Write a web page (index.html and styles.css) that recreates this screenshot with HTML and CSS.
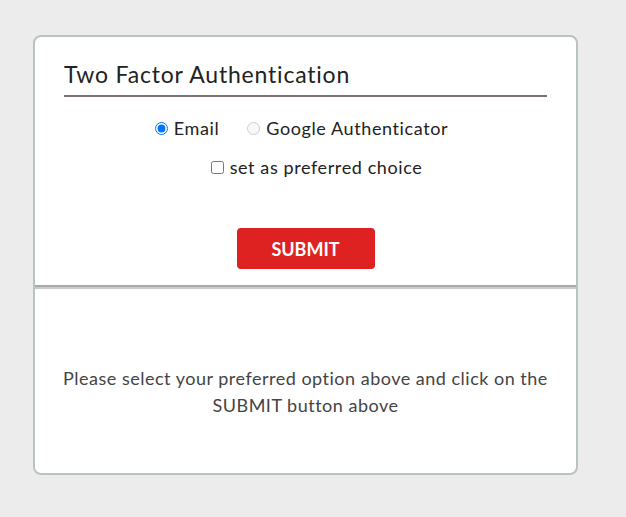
FILE: index.html
```html
<!DOCTYPE html>
<html>
<head>
<meta charset="utf-8">
<link rel="stylesheet" href="styles.css">
</head>
<body>
<div class="card">
  <div class="top">
    <h2 class="title">Two Factor Authentication</h2>
    <div class="options">
      <label class="opt"><input type="radio" name="m" checked> Email</label>
      <label class="opt"><input type="radio" name="m" disabled> Google Authenticator</label>
    </div>
    <div class="pref">
      <label class="opt"><input type="checkbox"> set as preferred choice</label>
    </div>
    <div class="actions">
      <button class="submit">SUBMIT</button>
    </div>
  </div>
  <div class="bottom">
    <p class="msg">Please select your preferred option above and click on the SUBMIT button above</p>
  </div>
</div>
</body>
</html>
```
FILE: styles.css
```css
html, body {
  margin: 0;
  background: #ececec;
}
body {
  padding: 35px 0 0 33px;
  font-family: Lato, "Open Sans", sans-serif;
  color: #222;
}
.card {
  width: 545px;
  height: 440px;
  box-sizing: border-box;
  background: #fff;
  border: 2px solid #b9c3c3;
  border-radius: 8px;
  display: flex;
  flex-direction: column;
  overflow: hidden;
}
.top {
  height: 250px;
  box-sizing: border-box;
  padding: 22px 29px 0;
  border-bottom: 2px solid #a9a9a9;
}
.title {
  margin: 0;
  font-size: 23px;
  font-weight: 400;
  letter-spacing: 0.8px;
  line-height: 30px;
  padding-bottom: 6px;
  border-bottom: 2px solid #7d7070;
}
.options {
  display: flex;
  justify-content: center;
  gap: 28px;
  margin-top: 20px;
  padding-right: 8px;
  font-size: 18px;
  letter-spacing: 0.6px;
  line-height: 22px;
}
.opt {
  display: flex;
  align-items: center;
}
.opt input {
  margin: 0 6px 0 0;
  width: 13px;
  height: 13px;
}
.pref {
  display: flex;
  justify-content: center;
  margin-top: 17px;
  padding-left: 22px;
  font-size: 18px;
  letter-spacing: 0.6px;
  line-height: 22px;
}
.actions {
  display: flex;
  justify-content: center;
  margin-top: 50px;
}
.submit {
  width: 138px;
  height: 41px;
  background: #de2222;
  color: #fff;
  border: none;
  border-radius: 4px;
  font-family: Lato, sans-serif;
  font-weight: 700;
  font-size: 18px;
  letter-spacing: 0;
}
.bottom {
  flex: 1;
  border-top: 2px solid #cacaca;
  display: flex;
  justify-content: center;
  padding: 76px 20px 0;
}
.msg {
  margin: 0;
  text-align: center;
  font-size: 18px;
  letter-spacing: 0.5px;
  line-height: 27px;
  color: #444;
  max-width: 500px;
}
```
